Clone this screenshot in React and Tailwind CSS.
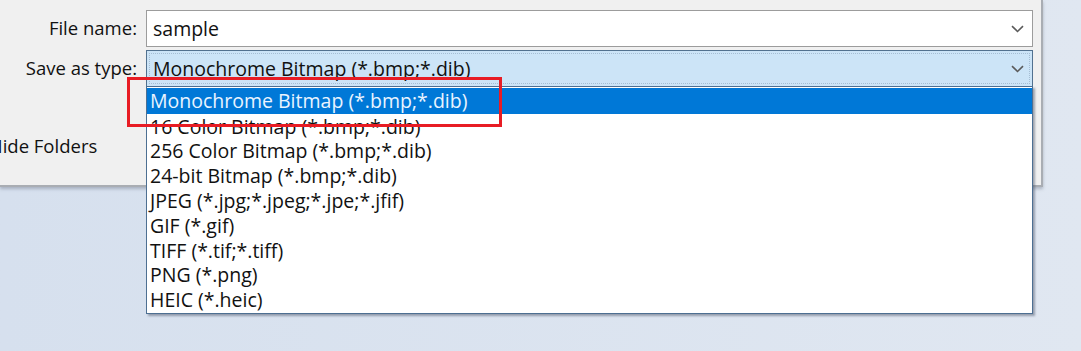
import React from "react";

const items = [
  "Monochrome Bitmap (*.bmp;*.dib)",
  "16 Color Bitmap (*.bmp;*.dib)",
  "256 Color Bitmap (*.bmp;*.dib)",
  "24-bit Bitmap (*.bmp;*.dib)",
  "JPEG (*.jpg;*.jpeg;*.jpe;*.jfif)",
  "GIF (*.gif)",
  "TIFF (*.tif;*.tiff)",
  "PNG (*.png)",
  "HEIC (*.heic)",
];

function Chevron() {
  return (
    <svg width="13" height="8" viewBox="0 0 13 8" className="shrink-0">
      <polyline points="1,1.2 6.5,6.5 12,1.2" fill="none" stroke="#5a5a5a" strokeWidth="1.6" />
    </svg>
  );
}

export default function App() {
  return (
    <div
      className="relative w-[1081px] h-[351px] overflow-hidden bg-gradient-to-r from-[#d6e0ee] to-[#e0e7f1] text-[19.5px] text-[#111]"
      style={{ fontFamily: '"Open Sans", "Noto Sans", sans-serif' }}
    >
      <div className="w-[1043px] h-[187px] bg-[#f0f0f0] border-r-2 border-b-2 border-[#a9adb3] shadow-[0_2px_3px_rgba(80,90,110,0.35)] flex flex-col">
        <div className="flex items-center mt-[10px] h-[37px]">
          <div className="w-[138px] text-right pr-[1px] leading-none text-[18.5px]">File name:</div>
          <div className="ml-[8px] w-[887px] h-full bg-white border border-[#9c9c9c] flex items-center justify-between pl-[6px] pr-[8px]">
            <span className="leading-none">sample</span>
            <Chevron />
          </div>
        </div>
        <div className="flex items-center mt-[3px] h-[37px]">
          <div className="w-[138px] text-right pr-[1px] leading-none text-[18.5px]">Save as type:</div>
          <div className="ml-[8px] w-[887px] h-full bg-[#cce4f7] border border-[#52718f] p-[2px]">
            <div className="h-full border border-dotted border-[#a5bdd3] flex items-center justify-between pl-[3px] pr-[5px]">
              <span className="leading-none">Monochrome Bitmap (*.bmp;*.dib)</span>
              <Chevron />
            </div>
          </div>
        </div>
        <div className="mt-[50px] ml-[-11px] leading-none text-[18.5px]">Hide Folders</div>
      </div>

      <div className="absolute left-[146px] top-[86px] w-[887px] bg-white border border-[#4d6f92] py-[1px] shadow-[2px_2px_2px_rgba(60,70,90,0.45)]">
        {items.map((t, i) => (
          <div
            key={t}
            className={
              i === 0
                ? "h-[26px] flex items-center pl-[3px] bg-[#0078d7] text-[#eaf4ff]"
                : "h-[24.8px] flex items-center pl-[3px]"
            }
          >
            <span className="leading-none">{t}</span>
          </div>
        ))}
      </div>

      <div className="absolute left-[127px] top-[77px] w-[375px] h-[50px] border-[3px] border-[#e81c24]" />
    </div>
  );
}
